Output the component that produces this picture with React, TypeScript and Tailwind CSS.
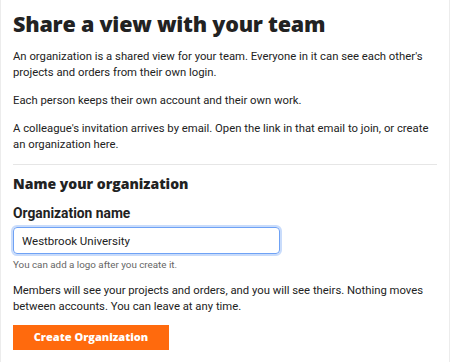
export default function App() {
  const body = "font-['Roboto',sans-serif] text-[11.3px] leading-[16px] text-[#222]";
  return (
    <div className="min-h-[362px] bg-white border-x border-[#ececec]">
      <div className="px-3 pt-[9px]">
        <h1 className="font-['Open_Sans',sans-serif] font-extrabold text-[21.5px] leading-[30px] text-[#222] tracking-[-0.01em]">
          Share a view with your team
        </h1>
        <p className={`${body} mt-[10px]`}>
          An organization is a shared view for your team. Everyone in it can see each other's projects and orders from their own login.
        </p>
        <p className={`${body} mt-[12px]`}>Each person keeps their own account and their own work.</p>
        <p className={`${body} mt-[12px]`}>
          A colleague's invitation arrives by email. Open the link in that email to join, or create an organization here.
        </p>
        <hr className="mt-[11px] border-t border-[#e6e6e6]" />
        <h2 className="mt-[9px] font-['Open_Sans',sans-serif] font-extrabold text-[14px] leading-[20px] text-[#222]">
          Name your organization
        </h2>
        <label className="mt-[10px] block font-['Roboto',sans-serif] font-bold text-[13.8px] leading-[18px] text-[#222]">
          Organization name
        </label>
        <input
          defaultValue="Westbrook University"
          className="mt-[5px] block w-[267px] h-[27px] rounded-[4px] border border-[#6fa2f5] ring-2 ring-[#c9dcfb] px-[8px] font-['Roboto',sans-serif] text-[11.5px] text-[#222] outline-none"
        />
        <p className="mt-[4px] font-['Roboto',sans-serif] text-[9.8px] leading-[14px] text-[#666]">
          You can add a logo after you create it.
        </p>
        <p className={`${body} mt-[11px]`}>
          Members will see your projects and orders, and you will see theirs. Nothing moves between accounts. You can leave at any time.
        </p>
        <button className="mt-[10px] w-[156px] h-[25px] bg-[#ff6a0d] text-white font-['Open_Sans',sans-serif] font-extrabold text-[11px]">
          Create Organization
        </button>
      </div>
    </div>
  );
}
